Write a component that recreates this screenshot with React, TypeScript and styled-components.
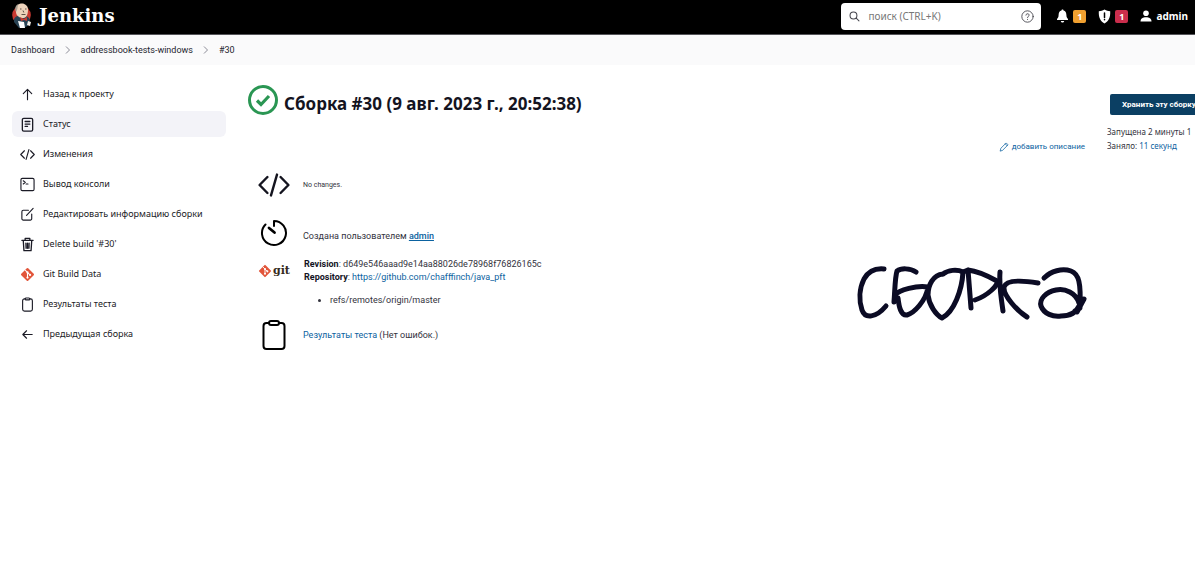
import React from "react";
import styled, { createGlobalStyle } from "styled-components";

const GlobalStyle = createGlobalStyle`
  *, *::before, *::after { box-sizing: border-box; }
  body {
    margin: 0;
    background: #fff;
    color: #14141f;
    font-family: "Noto Sans", "Open Sans", sans-serif;
    font-size: 9px;
    line-height: 14px;
    overflow-x: hidden;
  }
  a { color: #0b62a0; text-decoration: none; }
  svg { display: block; flex: none; }
`;

const Header = styled.header`
  display: flex;
  align-items: center;
  height: 35px;
  padding: 0 7px 2px 11px;
  background: #000;
  border-bottom: 1px solid #55555a;
`;

const Brand = styled.a`
  display: flex;
  align-items: center;
  gap: 7px;
  margin-right: auto;
  color: #fff;
  font: bold 18px/26px "DejaVu Serif", serif;
`;

const SearchBox = styled.label`
  display: flex;
  align-items: center;
  gap: 8px;
  width: 200px;
  height: 27px;
  margin-right: 15px;
  padding: 0 7px 0 8px;
  background: #fff;
  border-radius: 4px;
  color: #44444c;
`;

const SearchInput = styled.input`
  flex: 1;
  min-width: 0;
  padding: 0;
  border: 0;
  outline: 0;
  background: none;
  font: 10px/14px "Noto Sans", sans-serif;
  &::placeholder { color: #777; opacity: 1; }
`;

const HeaderLink = styled.a`
  display: flex;
  align-items: center;
  gap: 4px;
  margin-right: 12px;
  color: #fff;
  font: bold 10px/14px "Noto Sans", sans-serif;
  &:last-child { margin-right: 0; }
`;

const Badge = styled.span<{ $color: string }>`
  width: 13px;
  height: 13px;
  border-radius: 2px;
  background: ${(p) => p.$color};
  font-size: 9px;
  line-height: 13px;
  text-align: center;
`;

const Breadcrumbs = styled.nav`
  display: flex;
  align-items: center;
  gap: 10px;
  height: 30px;
  padding: 0 11px;
  background: #fafafb;
  color: #8b8b96;
  font-family: Roboto, sans-serif;
  a { color: #24242e; }
`;

const Page = styled.div`
  display: flex;
  align-items: flex-start;
  gap: 22px;
  padding: 16px 0 24px 12px;
`;

const Sidebar = styled.nav`
  display: flex;
  flex: none;
  flex-direction: column;
  gap: 4px;
  width: 214px;
`;

const Task = styled.a<{ $active?: boolean }>`
  display: flex;
  align-items: center;
  gap: 8px;
  height: 26px;
  padding: 0 8px;
  border-radius: 6px;
  background: ${(p) => (p.$active ? "#f3f3f8" : "transparent")};
  color: #1b1b26;
`;

const Main = styled.main`
  flex: 1;
  min-width: 0;
`;

const Title = styled.h1`
  display: flex;
  align-items: flex-start;
  gap: 6px;
  height: 40px;
  margin: 0;
  padding-top: 4px;
  font-size: 17px;
  line-height: 30px;
  white-space: nowrap;
  span { padding-top: 4px; }
`;

const Facts = styled.div`
  display: flex;
  flex-direction: column;
  padding: 40px 0 0 10px;
  font-family: Roboto, sans-serif;
  line-height: 13px;
`;

const Fact = styled.section<{ $height: number }>`
  display: flex;
  align-items: center;
  gap: 13px;
  height: ${(p) => p.$height}px;
`;

const FactIcon = styled.div`
  display: flex;
  flex: none;
  align-items: center;
  justify-content: center;
  width: 32px;
`;

const FactText = styled.div<{ $small?: boolean; $low?: boolean }>`
  padding-top: ${(p) => (p.$low ? 6 : 0)}px;
  color: #33333d;
  font-size: ${(p) => (p.$small ? 7 : 9)}px;
  b { color: #14141f; }
`;

const UserLink = styled.a`
  font-weight: 500;
  text-decoration: underline;
`;

const GitFact = styled.section`
  display: flex;
  gap: 13px;
  padding-top: 1px;
  height: 56px;
`;

const GitLogo = styled.div`
  display: flex;
  align-items: center;
  gap: 1px;
  width: 33px;
  height: 26px;
  color: #362b20;
  font: bold 11px/16px "DejaVu Serif", serif;
`;

const Refs = styled.ul`
  margin: 10px 0 0;
  padding-left: 26px;
`;

const Description = styled.a`
  display: flex;
  align-items: center;
  gap: 3px;
  margin-top: 59px;
  font-family: Roboto, sans-serif;
  font-size: 8px;
  white-space: nowrap;
`;

const Aside = styled.aside`
  flex: none;
  width: 88px;
  padding-top: 13px;
  overflow: hidden;
  color: #33333d;
  font-size: 8px;
  white-space: nowrap;
`;

const KeepButton = styled.button`
  display: block;
  height: 21px;
  margin: 0 0 10px 3px;
  padding: 0 12px;
  border: 0;
  border-radius: 2px;
  background: #0b3f63;
  color: #fff;
  font: bold 8px/21px Roboto, sans-serif;
  white-space: nowrap;
`;

const Annotation = styled.svg`
  position: absolute;
  top: 263px;
  right: 107px;
`;

const Svg = ({ size = 15, width = 1.2, children }: { size?: number; width?: number; children: React.ReactNode }) => (
  <svg width={size} height={size} viewBox="0 0 16 16" fill="none" stroke="currentColor" strokeWidth={width} strokeLinecap="round" strokeLinejoin="round" aria-hidden="true">
    {children}
  </svg>
);

const Code = ({ size, width }: { size?: number; width?: number }) => (
  <Svg size={size} width={width}><path d="M4.700 4 .8 8l3.900 4M11.300 4l3.900 4-3.900 4M9.500 2.800l-3 10.400" /></Svg>
);

const Clipboard = () => (
  <Svg><rect x="2.8" y="2" width="10.400" height="13" rx="2" /><rect x="5.500" y="1" width="5" height="2" rx="1" fill="#fff" /></Svg>
);

const GitMark = ({ size }: { size: number }) => (
  <svg width={size} height={size} viewBox="0 0 16 16" aria-hidden="true">
    <rect x="2.8" y="2.8" width="10.400" height="10.400" rx="1" fill="#e2553a" transform="rotate(45 8 8)" />
    <path d="M5.500 3.300 8 5.800v5.400M8 5.900l2.700 2.500" fill="none" stroke="#fff" strokeWidth="1.1" />
    <circle cx="8" cy="5.800" r="1.2" fill="#fff" /><circle cx="8" cy="11.200" r="1.2" fill="#fff" /><circle cx="10.700" cy="8.400" r="1.2" fill="#fff" />
  </svg>
);

const Butler = () => (
  <svg width="21" height="26" viewBox="0 0 21 26" aria-hidden="true">
    <circle cx="10.500" cy="12" r="9.300" fill="#c93a32" />
    <path d="M3 16c1-3 5-4 8-3 4-1 7 1 8 4l-1 5-5 3H8l-5-6Z" fill="#294354" />
    <path d="M5 5c0-3 3-4.500 6-4.500s6 2.500 6 6c0 5-1.500 8-4.500 8.500C8 15.500 5 12 5 9Z" fill="#edd3bc" />
    <path d="M5 9c-2-4 0-7.500 3-8-2 2-1 4-2 6Z" fill="#aaa093" />
    <path d="M9 6h1.500M14 6h1.500M12 7.500l.8 2M10.500 11.500h4" stroke="#3a3029" strokeWidth=".8" fill="none" />
    <path d="m9 14 4 2 3-2v4l-3-1-3 1Z" fill="#c93a32" />
    <path d="m7 18 6 1 1 6H9Z" fill="#fff" />
    <path d="m17 18 3 1-1 4-3-1Z" fill="#f3ede6" />
  </svg>
);

const tasks: { label: string; icon: React.ReactNode; active?: boolean }[] = [
  { label: "Назад к проекту", icon: <Svg><path d="M8 13.500v-11M3.500 7 8 2.500 12.500 7" /></Svg> },
  { label: "Статус", active: true, icon: <Svg width={1.4}><rect x="2.500" y="1.500" width="11" height="13.500" rx="1.500" /><path d="M5.500 4.800h5M5.500 7.500h5M5.500 10h2.500" /></Svg> },
  { label: "Изменения", icon: <Code /> },
  { label: "Вывод консоли", icon: <Svg><rect x="1" y="1.500" width="14" height="13" rx="1.500" /><path d="m3.500 4 2.200 1.700L3.500 7.400M6.500 7.500h2" /></Svg> },
  { label: "Редактировать информацию сборки", icon: <Svg><path d="M9 3.500H3.500A1.500 1.500 0 0 0 2 5v7.500A1.500 1.500 0 0 0 3.500 14H11a1.500 1.500 0 0 0 1.500-1.500V7.500M7 9l7-7.500" /></Svg> },
  { label: "Delete build '#30'", icon: <Svg width={1.4}><path d="M2 3.500h12M5.500 3V1.500h5V3M3.500 4l.7 10.500h7.600L12.500 4M6.300 6.500l.2 5.500M9.700 6.500 9.500 12M8 6.500V12" /></Svg> },
  { label: "Git Build Data", icon: <GitMark size={15} /> },
  { label: "Результаты теста", icon: <Clipboard /> },
  { label: "Предыдущая сборка", icon: <Svg><path d="M13 8H3M7 4 3 8l4 4" /></Svg> },
];

const Chevron = () => (
  <svg width="6" height="8" viewBox="0 0 6 8" fill="none" stroke="currentColor" aria-hidden="true"><path d="m1 .5 3.500 3.500L1 7.500" /></svg>
);

export default function App() {
  return (
    <>
      <GlobalStyle />
      <Header>
        <Brand href="#"><Butler />Jenkins</Brand>
        <SearchBox>
          <Svg size={11} width={1.5}><circle cx="6.500" cy="6.500" r="5" /><path d="m10.500 10.500 4 4" /></Svg>
          <SearchInput type="search" aria-label="поиск" placeholder="поиск (CTRL+K)" />
          <Svg size={13} width={1.1}><circle cx="8" cy="8" r="7" /><path d="M6 6.300C6 4 10 4 10 6.300 10 7.800 8 7.800 8 9.300M8 11.500v.2" /></Svg>
        </SearchBox>
        <HeaderLink href="#" aria-label="Уведомления">
          <svg width="13" height="14" viewBox="0 0 13 14" fill="#fff" aria-hidden="true"><path d="M6.500.5c.8 0 1 .5 1 1C9.500 2 10.400 3.700 10.400 6c0 2.500.8 3 1.600 4v1H1v-1c.8-1 1.600-1.500 1.600-4 0-2.300.9-4 2.900-4.500 0-.5.200-1 1-1ZM4.800 12h3.400c-.5 2-2.900 2-3.400 0Z" /></svg>
          <Badge $color="#f0a030">1</Badge>
        </HeaderLink>
        <HeaderLink href="#" aria-label="Безопасность">
          <svg width="13" height="15" viewBox="0 0 13 15" aria-hidden="true"><path d="M6.500.5C4.500 1.700 3 2 .8 2.200c-.3 6 1.500 10 5.700 12.300 4.200-2.300 6-6.300 5.700-12.300C10 2 8.500 1.700 6.500.5Z" fill="#fff" /><path d="M6.500 4v4.500M6.500 10.500v.3" stroke="#000" strokeWidth="1.500" strokeLinecap="round" /></svg>
          <Badge $color="#ca2d4c">1</Badge>
        </HeaderLink>
        <HeaderLink href="#">
          <svg width="12" height="12" viewBox="0 0 12 12" fill="#fff" aria-hidden="true"><circle cx="6" cy="3.300" r="2.800" /><path d="M.5 11.500C.5 8.500 3 7.300 6 7.300s5.500 1.200 5.500 4.200Z" /></svg>
          admin
        </HeaderLink>
      </Header>
      <Breadcrumbs aria-label="Навигация">
        <a href="#">Dashboard</a><Chevron />
        <a href="#">addressbook-tests-windows</a><Chevron />
        <a href="#">#30</a>
      </Breadcrumbs>
      <Page>
        <Sidebar>
          {tasks.map((t) => (
            <Task key={t.label} href="#" $active={t.active}>{t.icon}{t.label}</Task>
          ))}
        </Sidebar>
        <Main>
          <Title>
            <svg width="30" height="30" viewBox="0 0 30 30" fill="none" stroke="#2a9653" aria-hidden="true"><circle cx="15" cy="15" r="13.500" strokeWidth="3" /><path d="m9 15.500 4 4 8-8.500" strokeWidth="3.200" /></svg>
            <span>Сборка #30 (9 авг. 2023 г., 20:52:38)</span>
          </Title>
          <Facts>
            <Fact $height={48}>
              <FactIcon><Code size={32} width={1.2} /></FactIcon>
              <FactText $small>No changes.</FactText>
            </Fact>
            <Fact $height={48}>
              <FactIcon>
                <svg width="28" height="28" viewBox="0 0 28 28" fill="none" stroke="#000" strokeWidth="2" strokeLinecap="round" strokeLinejoin="round" aria-hidden="true"><path d="M14 7V2a12 12 0 1 1-8.500 3.500" /><path d="m9 9 5.500 4.500" strokeWidth="2.800" /></svg>
              </FactIcon>
              <FactText $low>Создана пользователем <UserLink href="#">admin</UserLink></FactText>
            </Fact>
            <GitFact>
              <GitLogo><GitMark size={14} />git</GitLogo>
              <FactText>
                <b>Revision</b>: d649e546aaad9e14aa88026de78968f76826165c<br />
                <b>Repository</b>: <a href="#">https://github.com/chafffinch/java_pft</a>
                <Refs><li>refs/remotes/origin/master</li></Refs>
              </FactText>
            </GitFact>
            <Fact $height={44}>
              <FactIcon>
                <svg width="24" height="30" viewBox="0 0 24 30" fill="none" stroke="#000" strokeWidth="2" aria-hidden="true"><rect x="1.500" y="3" width="21" height="26" rx="3" /><rect x="7" y="1" width="10" height="4" rx="2" fill="#fff" /></svg>
              </FactIcon>
              <FactText><a href="#">Результаты теста</a> (Нет ошибок.)</FactText>
            </Fact>
          </Facts>
        </Main>
        <Description href="#">
          <Svg size={10}><path d="m2 14 1-4 8.500-8.500 3 3L6 13ZM10 3l3 3" /></Svg>
          добавить описание
        </Description>
        <Aside>
          <KeepButton type="button">Хранить эту сборку</KeepButton>
          Запущена 2 минуты 1<br />
          Заняло: <a href="#">11 секунд</a>
        </Aside>
      </Page>
      <Annotation width="232" height="60" viewBox="0 0 232 60" fill="none" stroke="#0b0b24" strokeWidth="5" strokeLinecap="round" strokeLinejoin="round" role="img" aria-label="сборка">
        <path d="M28 6C18 5 12 9 8 16 3 26 3 38 6 47c3 9 14 8 24-4" />
        <path d="M60 9C54 5 45 5 41 8c-2 6-2 18-3 31M39 32c4-5 22-10 33-8-2 14-14 26-21 28-6 1-8-8-9-17" />
        <path d="M87 11c-10 1-15 11-15 21 1 10 8 20 14 23 12-6 20-28 21-46-6-3-15-2-20 2" />
        <path d="M107 9 112 7 115 45M112 7c9 1 20 6 29 11 2 4-10 15-22 19" />
        <path d="M144 9c-1 13 1 26 3 39M182 20c-18-3-32-3-34 4-1 8 13 24 23 30" />
        <path d="M188 15c7-7 18-10 27-7 8 3 10 12 9 37l-5 3M228 36l-7 13M223 40c-3-10-14-15-23-13-10 2-17 9-15 16 3 8 12 11 20 10 8 0 15-3 18-10" />
      </Annotation>
    </>
  );
}
